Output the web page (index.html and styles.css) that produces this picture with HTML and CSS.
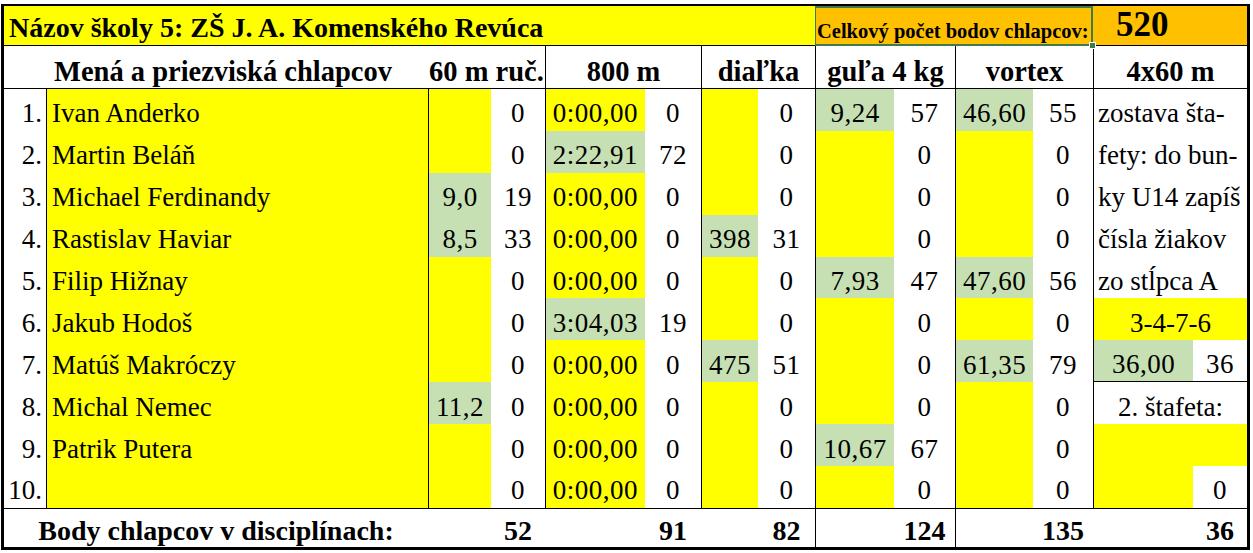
FILE: index.html
```html
<!DOCTYPE html>
<html lang="sk">
<head>
<meta charset="utf-8">
<title>Názov školy 5</title>
<link rel="stylesheet" href="styles.css">
</head>
<body>
<div class="page">
  <div class="sheet">
    <!-- title row -->
    <div class="c title y span8">Názov školy 5: ZŠ J. A. Komenského Revúca</div>
    <div class="c total-label o span4 bl">Celkový počet bodov chlapcov:<span class="handle"></span></div>
    <div class="c total-val o span2">520</div>

    <!-- header row -->
    <div class="c h hname span2">Mená a priezviská chlapcov</div>
    <div class="c h span2">60 m ruč.</div>
    <div class="c h span2 bl">800 m</div>
    <div class="c h span2 bl">diaľka</div>
    <div class="c h span2 bl">guľa 4 kg</div>
    <div class="c h span2 bl">vortex</div>
    <div class="c h span2 bl">4x60 m</div>

    <!-- row 1 -->
    <div class="c num">1.</div>
    <div class="c name y bl">Ivan Anderko</div>
    <div class="c v y bl"></div><div class="c p">0</div>
    <div class="c v y bl">0:00,00</div><div class="c p">0</div>
    <div class="c v y bl"></div><div class="c p">0</div>
    <div class="c v g bl">9,24</div><div class="c p">57</div>
    <div class="c v g bl">46,60</div><div class="c p">55</div>
    <div class="c note span2 bl">zostava šta-</div>

    <!-- row 2 -->
    <div class="c num">2.</div>
    <div class="c name y bl">Martin Beláň</div>
    <div class="c v y bl"></div><div class="c p">0</div>
    <div class="c v g bl">2:22,91</div><div class="c p">72</div>
    <div class="c v y bl"></div><div class="c p">0</div>
    <div class="c v y bl"></div><div class="c p">0</div>
    <div class="c v y bl"></div><div class="c p">0</div>
    <div class="c note span2 bl">fety: do bun-</div>

    <!-- row 3 -->
    <div class="c num">3.</div>
    <div class="c name y bl">Michael Ferdinandy</div>
    <div class="c v g bl">9,0</div><div class="c p">19</div>
    <div class="c v y bl">0:00,00</div><div class="c p">0</div>
    <div class="c v y bl"></div><div class="c p">0</div>
    <div class="c v y bl"></div><div class="c p">0</div>
    <div class="c v y bl"></div><div class="c p">0</div>
    <div class="c note span2 bl">ky U14 zapíš</div>

    <!-- row 4 -->
    <div class="c num">4.</div>
    <div class="c name y bl">Rastislav Haviar</div>
    <div class="c v g bl">8,5</div><div class="c p">33</div>
    <div class="c v y bl">0:00,00</div><div class="c p">0</div>
    <div class="c v g bl">398</div><div class="c p">31</div>
    <div class="c v y bl"></div><div class="c p">0</div>
    <div class="c v y bl"></div><div class="c p">0</div>
    <div class="c note span2 bl">čísla žiakov</div>

    <!-- row 5 -->
    <div class="c num">5.</div>
    <div class="c name y bl">Filip Hižnay</div>
    <div class="c v y bl"></div><div class="c p">0</div>
    <div class="c v y bl">0:00,00</div><div class="c p">0</div>
    <div class="c v y bl"></div><div class="c p">0</div>
    <div class="c v g bl">7,93</div><div class="c p">47</div>
    <div class="c v g bl">47,60</div><div class="c p">56</div>
    <div class="c note span2 bl">zo stĺpca A</div>

    <!-- row 6 -->
    <div class="c num">6.</div>
    <div class="c name y bl">Jakub Hodoš</div>
    <div class="c v y bl"></div><div class="c p">0</div>
    <div class="c v g bl">3:04,03</div><div class="c p">19</div>
    <div class="c v y bl"></div><div class="c p">0</div>
    <div class="c v y bl"></div><div class="c p">0</div>
    <div class="c v y bl"></div><div class="c p">0</div>
    <div class="c relay y span2 bl">3-4-7-6</div>

    <!-- row 7 -->
    <div class="c num">7.</div>
    <div class="c name y bl">Matúš Makróczy</div>
    <div class="c v y bl"></div><div class="c p">0</div>
    <div class="c v y bl">0:00,00</div><div class="c p">0</div>
    <div class="c v g bl">475</div><div class="c p">51</div>
    <div class="c v y bl"></div><div class="c p">0</div>
    <div class="c v g bl">61,35</div><div class="c p">79</div>
    <div class="c v g bl bb">36,00</div><div class="c p bb">36</div>

    <!-- row 8 -->
    <div class="c num">8.</div>
    <div class="c name y bl">Michal Nemec</div>
    <div class="c v g bl">11,2</div><div class="c p">0</div>
    <div class="c v y bl">0:00,00</div><div class="c p">0</div>
    <div class="c v y bl"></div><div class="c p">0</div>
    <div class="c v y bl"></div><div class="c p">0</div>
    <div class="c v y bl"></div><div class="c p">0</div>
    <div class="c relay span2 bl">2. štafeta:</div>

    <!-- row 9 -->
    <div class="c num">9.</div>
    <div class="c name y bl">Patrik Putera</div>
    <div class="c v y bl"></div><div class="c p">0</div>
    <div class="c v y bl">0:00,00</div><div class="c p">0</div>
    <div class="c v y bl"></div><div class="c p">0</div>
    <div class="c v g bl">10,67</div><div class="c p">67</div>
    <div class="c v y bl"></div><div class="c p">0</div>
    <div class="c relay y span2 bl"></div>

    <!-- row 10 -->
    <div class="c num">10.</div>
    <div class="c name y bl"></div>
    <div class="c v y bl"></div><div class="c p">0</div>
    <div class="c v y bl">0:00,00</div><div class="c p">0</div>
    <div class="c v y bl"></div><div class="c p">0</div>
    <div class="c v y bl"></div><div class="c p">0</div>
    <div class="c v y bl"></div><div class="c p">0</div>
    <div class="c v y bl"></div><div class="c p">0</div>

    <!-- footer row -->
    <div class="c f flabel span2">Body chlapcov v disciplínach:</div>
    <div class="c f"></div><div class="c f fp">52</div>
    <div class="c f"></div><div class="c f fp">91</div>
    <div class="c f"></div><div class="c f fp">82</div>
    <div class="c f bl"></div><div class="c f fp">124</div>
    <div class="c f bl"></div><div class="c f fp">135</div>
    <div class="c f"></div><div class="c f fp">36</div>
  </div>
</div>
</body>
</html>
```

FILE: styles.css
```css
* { box-sizing: border-box; }

html, body {
  margin: 0;
  padding: 0;
  background: #ffffff;
}

.page {
  padding: 4px 0 0 1px;
  font-family: "Liberation Serif", "Times New Roman", serif;
  color: #000;
}

.sheet {
  display: grid;
  width: 1249px;
  grid-template-columns: 42px 382px 63px 54px 100px 56px 57px 57px 79px 61px 78px 60px 100px 54px;
  grid-template-rows: 40px 43px repeat(10, 41.9px) 39px;
  border: 3px solid #000;
  border-top-width: 2px;
  background: #fff;
}

.c {
  display: flex;
  align-items: center;
  justify-content: center;
  font-size: 27px;
  line-height: 1;
  white-space: nowrap;
  overflow: hidden;
  padding-top: 8px;
}

.span2 { grid-column: span 2; }
.span4 { grid-column: span 4; }
.span8 { grid-column: span 8; }

.bl { border-left: 1px solid #000; }
.bb { border-bottom: 1px solid #000; }

.y { background: #ffff00; }
.g { background: #c6e0b4; }
.o { background: #ffc000; }

/* title row */
.title {
  justify-content: flex-start;
  align-items: flex-end;
  padding: 0 0 3px 5px;
  font-weight: bold;
  font-size: 28px;
  border-bottom: 1px solid #000;
}

.total-label {
  position: relative;
  overflow: visible;
  justify-content: flex-start;
  align-items: flex-end;
  padding: 0 0 3px 1px;
  font-weight: bold;
  font-size: 20.5px;
  border: 2px solid #3d7a4c;
  border-left-width: 1px;
}

.handle {
  position: absolute;
  right: -5px;
  bottom: -5px;
  width: 7px;
  height: 7px;
  background: #3d7a4c;
  border: 1px solid #fff;
}

.total-val {
  overflow: visible;
  justify-content: flex-start;
  align-items: flex-end;
  padding: 0 0 3px 23px;
  font-weight: bold;
  font-size: 35px;
  border-bottom: 1px solid #000;
}

/* header row */
.h {
  font-weight: bold;
  font-size: 28.5px;
  border-bottom: 1px solid #000;
  padding-top: 10px;
}

.hname { padding-left: 14px; }

/* data rows */
.num {
  justify-content: flex-end;
  padding-right: 4px;
}

.name {
  justify-content: flex-start;
  padding-left: 5px;
}

.v, .p { letter-spacing: 0.5px; }

.note {
  justify-content: flex-start;
  padding-left: 4px;
}

/* footer */
.f {
  border-top: 1px solid #000;
  font-weight: bold;
  font-size: 28px;
  padding-top: 6px;
}
```
